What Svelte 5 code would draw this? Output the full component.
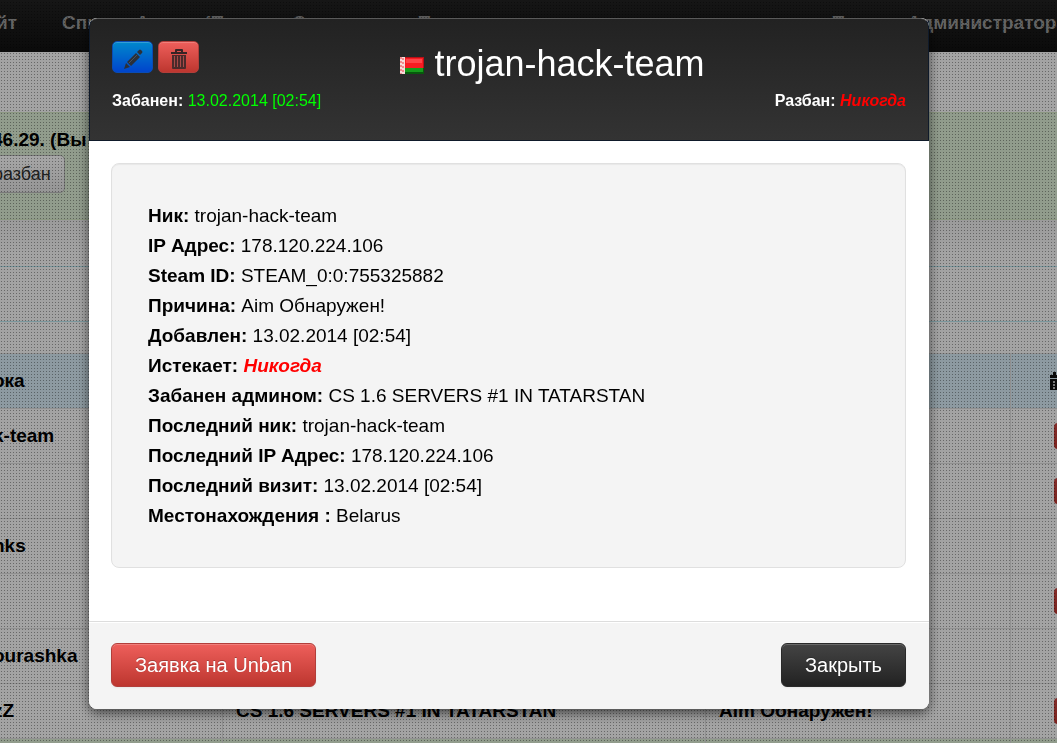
<script lang="ts">
type Detail = { label: string; value: string; never?: boolean };
type Row = { nick: string; admin?: string; reason?: string; action?: boolean; visited?: boolean };

const nick = "trojan-hack-team";
const bannedAt = "13.02.2014 [02:54]";

const details: Detail[] = [
    { label: "Ник:", value: nick },
    { label: "IP Адрес:", value: "178.120.224.106" },
    { label: "Steam ID:", value: "STEAM_0:0:755325882" },
    { label: "Причина:", value: "Aim Обнаружен!" },
    { label: "Добавлен:", value: bannedAt },
    { label: "Истекает:", value: "Никогда", never: true },
    { label: "Забанен админом:", value: "CS 1.6 SERVERS #1 IN TATARSTAN" },
    { label: "Последний ник:", value: nick },
    { label: "Последний IP Адрес:", value: "178.120.224.106" },
    { label: "Последний визит:", value: bannedAt },
    { label: "Местонахождения :", value: "Belarus" },
];

const rows: Row[] = [
    { nick: "k-team", action: true },
    { nick: "", action: true },
    { nick: "nks" },
    { nick: "", action: true },
    { nick: "ourashka" },
    { nick: "zZ", admin: "CS 1.6 SERVERS #1 IN TATARSTAN", reason: "Aim Обнаружен!", action: true },
    { nick: "", visited: true },
];

let open = $state(true);

function close() {
    open = false;
}
</script>

<div class="page">
    <nav class="navbar">
        <div class="links">
            <a href="#site">йт</a>
            <a href="#bans">Список Админ (Про</a>
            <a href="#stats">Сервера</a>
            <a href="#search">Поиск</a>
        </div>
        <div class="user">
            <a href="#hello">Привет,</a>
            <a href="#admin">Администратора</a>
        </div>
    </nav>

    <div class="alert">
        <strong>46.29. (Вы</strong>
        <button class="unban">разбан</button>
    </div>

    <div class="filters">
        <div class="filter"></div>
        <div class="filter"></div>
    </div>

    <table>
        <colgroup>
            <col class="col-nick" />
            <col class="col-admin" />
            <col />
            <col class="col-action" />
        </colgroup>
        <thead>
            <tr>
                <th>ока</th>
                <th></th>
                <th></th>
                <th class="action">
                    <svg class="calendar" viewBox="0 0 18 18" aria-hidden="true">
                        <path d="M0 3h3V0h3v3h6V0h3v3h3v3H0z M0 7h18v11H0z" fill="#111" />
                        <path d="M3 9h2v2H3z M7 9h2v2H7z M11 9h2v2h-2z M3 12h2v2H3z M7 12h2v2H7z M11 12h2v2h-2z M3 15h2v2H3z M7 15h2v2H7z M11 15h2v2h-2z" fill="#bbb" />
                    </svg>
                </th>
            </tr>
        </thead>
        <tbody>
            {#each rows as row}
                <tr class:visited={row.visited}>
                    <td>{row.nick}</td>
                    <td>{row.admin ?? ""}</td>
                    <td>{row.reason ?? ""}</td>
                    <td class="action">
                        {#if row.action}
                            <button class="remove" aria-label="Удалить"></button>
                        {/if}
                    </td>
                </tr>
            {/each}
        </tbody>
    </table>
</div>

{#if open}
    <div class="backdrop">
        <div class="modal" role="dialog" aria-labelledby="modal-title">
            <header>
                <div class="heading">
                    <div class="tools">
                        <button class="tool edit" aria-label="Редактировать">
                            <svg viewBox="0 0 20 20" aria-hidden="true">
                                <path d="M1 20l2-6 4 4z M4 13L13 4l4 4-9 9z M14 3l2-2q1-1 2 0l1 1q1 1 0 2l-2 2z" fill="#2b3038" />
                                <path d="M6 14l8-8" stroke="#4a525c" fill="none" />
                            </svg>
                        </button>
                        <button class="tool danger" aria-label="Удалить">
                            <svg viewBox="0 0 20 20" aria-hidden="true">
                                <path d="M6 3V1q0-1 1-1h6q1 0 1 1v2h4v2H2V3z M8 2v1h4V2z" fill="#362425" fill-rule="evenodd" />
                                <path d="M3 6h14v13q0 1-1 1H4q-1 0-1-1z" fill="#4a2a2a" />
                                <path d="M5.500 7v11M8.500 7v11M11.500 7v11M14.500 7v11" stroke="#a84a48" fill="none" />
                            </svg>
                        </button>
                    </div>
                    <h1 id="modal-title">
                        <svg class="flag" viewBox="0 0 24 17" aria-hidden="true">
                            <rect width="24" height="17" fill="#b81016" />
                            <rect y="11" width="24" height="6" fill="#075a0c" />
                            <rect x="5" y="1" width="18" height="10" fill="#f81c22" />
                            <rect x="6" y="2" width="16" height="4" fill="#ff4448" />
                            <rect x="5" y="11" width="18" height="4" fill="#169c1c" />
                            <rect width="5" height="17" fill="#f6dcdc" />
                            <path d="M1 0v17M3 1v16" stroke="#ee3a40" stroke-dasharray="2 2" />
                        </svg>
                        {nick}
                    </h1>
                </div>
                <div class="dates">
                    <div><strong>Забанен:</strong> <span class="date">{bannedAt}</span></div>
                    <div><strong>Разбан:</strong> <em>Никогда</em></div>
                </div>
            </header>

            <div class="body">
                <div class="well">
                    {#each details as detail}
                        <div>
                            <strong>{detail.label}</strong>
                            {#if detail.never}
                                <em>{detail.value}</em>
                            {:else}
                                <span>{detail.value}</span>
                            {/if}
                        </div>
                    {/each}
                </div>
            </div>

            <footer>
                <button class="large danger">Заявка на Unban</button>
                <button class="large inverse" onclick={close}>Закрыть</button>
            </footer>
        </div>
    </div>
{/if}

<style>
    :global(body) {
        background: #fafafa;
        overflow: hidden;
    }

    .page, .backdrop {
        font-family: "Liberation Sans", Arial, sans-serif;
        font-size: 19px;
        line-height: 30px;
        color: #000;
    }

    .page {
        height: 100vh;
        overflow: hidden;
    }

    button {
        font-family: inherit;
        cursor: pointer;
    }

    .navbar {
        display: flex;
        justify-content: space-between;
        height: 52px;
        background: linear-gradient(#222, #111);
        white-space: nowrap;
        overflow: hidden;
    }

    .navbar a {
        color: #999;
        font-weight: bold;
        line-height: 46px;
        text-decoration: none;
    }

    .links {
        display: flex;
        gap: 45px;
        margin-left: -4px;
    }

    .user {
        display: flex;
        gap: 4px;
        margin-right: -10px;
    }

    .alert {
        height: 86px;
        margin-top: 60px;
        padding: 12px 0 8px;
        border: solid #d6e9c6;
        border-width: 1px 0;
        background: #dff0d8;
    }

    .alert strong {
        display: block;
        margin-left: -8px;
    }

    .unban {
        height: 38px;
        margin-left: -21px;
        padding: 0 13px;
        border: 1px solid #bbb;
        border-radius: 5px;
        background: linear-gradient(#fff, #e6e6e6);
        color: #333;
        font-size: 18px;
    }

    .filters {
        padding: 46px 0 31px;
        background: linear-gradient(#efefef, #fafafa 34px);
    }

    .filter {
        height: 54px;
        border-top: 1px solid #bce8f1;
    }

    .filter:last-child {
        height: 0;
    }

    table {
        width: calc(100% + 81px);
        margin-left: -8px;
        border-collapse: collapse;
        table-layout: fixed;
    }

    .col-nick {
        width: 230px;
    }

    .col-admin {
        width: 483px;
    }

    .col-action {
        width: 120px;
    }

    th, td {
        box-sizing: border-box;
        height: 55px;
        padding: 0 13px;
        border-top: 1px solid #ddd;
        border-left: 1px solid #ddd;
        font-weight: bold;
        text-align: left;
        white-space: nowrap;
    }

    th:first-child, td:first-child {
        padding-left: 0;
    }

    th {
        background: #d9edf7;
    }

    .visited td {
        background: #dff0d8;
    }

    th.action {
        padding-left: 39px;
    }

    td.action {
        padding-left: 43px;
    }

    .calendar {
        display: block;
        width: 18px;
        height: 18px;
    }

    .remove {
        display: block;
        width: 32px;
        height: 26px;
        border: 0;
        border-radius: 4px;
        background: linear-gradient(#ca4540, #bd362f);
    }

    /* one dark dot in every 3px cell, over a plain dim layer */
    .backdrop {
        position: fixed;
        inset: 0;
        padding: 18px 128px 0 89px;
        background:
            conic-gradient(from 0deg at 2px 1px, rgba(0, 0, 0, 0.36) 25%, transparent 0) -1px 2px / 3px 3px,
            rgba(0, 0, 0, 0.35);
    }

    .modal {
        border-radius: 8px;
        background: #fff;
        box-shadow: 0 4px 12px rgba(0, 0, 0, 0.6);
        overflow: hidden;
    }

    header {
        padding: 22px 22px 24px;
        border: 1px solid #0f1a2a;
        border-top-color: #5a5a5a;
        border-radius: 8px 8px 0 0;
        background: linear-gradient(#222, #333);
        color: #fff;
    }

    .heading {
        display: flex;
        align-items: flex-start;
    }

    .tools {
        display: flex;
        gap: 5px;
    }

    .tool {
        display: flex;
        align-items: center;
        justify-content: center;
        width: 41px;
        height: 32px;
        padding: 4px 0 0;
        border: 1px solid #0a4cb4;
        border-radius: 5px;
        box-shadow: inset 0 1px 0 rgba(255, 255, 255, 0.2);
    }

    .tool svg {
        width: 20px;
        height: 20px;
    }

    .edit {
        background: linear-gradient(#08c, #04c);
    }

    .danger {
        border-color: #b23e3a;
        background: linear-gradient(#ee5f5b, #bd362f);
        color: #fff;
    }

    h1 {
        flex: 1;
        display: flex;
        align-items: center;
        justify-content: center;
        gap: 10px;
        margin: 0;
        font-size: 36px;
        font-weight: normal;
        line-height: 45px;
    }

    .flag {
        width: 24px;
        height: 17px;
        margin-top: 3px;
    }

    .dates {
        display: flex;
        justify-content: space-between;
        font-size: 16px;
    }

    .date {
        color: #0f0;
    }

    em {
        color: #f00;
        font-weight: bold;
    }

    .body {
        padding: 22px 23px 53px 22px;
    }

    .well {
        padding: 37px 36px 36px;
        border: 1px solid #e0e0e0;
        border-radius: 8px;
        background: #f4f4f4;
        box-shadow: inset 0 1px 1px rgba(0, 0, 0, 0.05);
    }

    footer {
        display: flex;
        justify-content: space-between;
        padding: 21px 23px 22px 22px;
        border-top: 1px solid #ddd;
        background: #f4f4f4;
        box-shadow: inset 0 1px 0 #fff;
    }

    .large {
        height: 44px;
        padding: 0 23px;
        border-width: 1px;
        border-style: solid;
        border-radius: 6px;
        box-shadow: inset 0 1px 0 rgba(255, 255, 255, 0.2), 0 1px 2px rgba(0, 0, 0, 0.05);
        font-size: 20px;
        text-shadow: 0 -1px 0 rgba(0, 0, 0, 0.25);
    }

    .inverse {
        border-color: #2a2a2a;
        background: linear-gradient(#444, #222);
        color: #fff;
    }
</style>
